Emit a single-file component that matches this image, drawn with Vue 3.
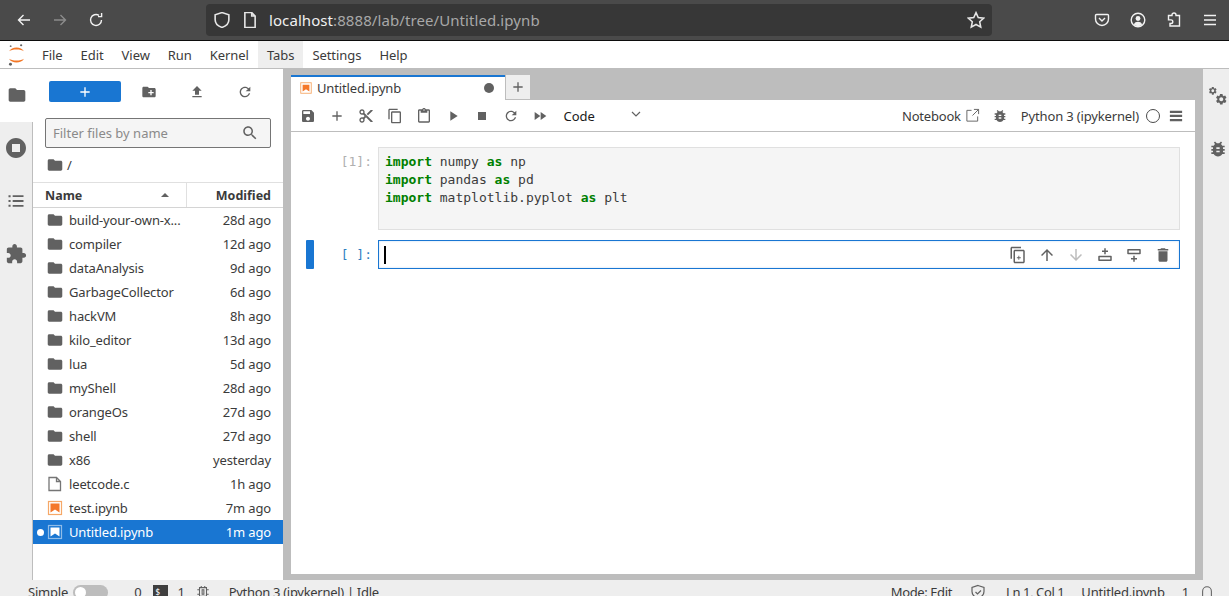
<script setup>
const icons = {
  folder: "M10 4H4c-1.1 0-1.99.9-1.99 2L2 18c0 1.1.9 2 2 2h16c1.1 0 2-.9 2-2V8c0-1.1-.9-2-2-2h-8l-2-2z",
  stopCircle: "M12 2C6.48 2 2 6.48 2 12s4.48 10 10 10 10-4.48 10-10S17.52 2 12 2zm4 14H8V8h8v8z",
  list: "M3 5h2.5v2.5H3zM8 5h13v2.2H8zM3 10.8h2.5v2.5H3zM8 10.9h13v2.2H8zM3 16.5h2.5V19H3zM8 16.7h13v2.2H8z",
  extension: "M20.5 11H19V7c0-1.1-.9-2-2-2h-4V3.5C13 2.12 11.88 1 10.5 1S8 2.12 8 3.5V5H4c-1.1 0-1.99.9-1.99 2v3.8H3.5c1.49 0 2.7 1.21 2.7 2.7s-1.21 2.7-2.7 2.7H2V20c0 1.1.9 2 2 2h3.8v-1.5c0-1.49 1.21-2.7 2.7-2.7 1.49 0 2.7 1.21 2.7 2.7V22H17c1.1 0 2-.9 2-2v-4h1.5c1.38 0 2.5-1.12 2.5-2.5S21.88 11 20.5 11z",
  add: "M19 13h-6v6h-2v-6H5v-2h6V5h2v6h6v2z",
  newFolder: "M20 6h-8l-2-2H4c-1.11 0-1.99.89-1.99 2L2 18c0 1.11.89 2 2 2h16c1.11 0 2-.89 2-2V8c0-1.11-.89-2-2-2zm-1 8h-3v3h-2v-3h-3v-2h3V9h2v3h3v2z",
  upload: "M9 16h6v-6h4l-7-7-7 7h4v6zm-4 2h14v2H5z",
  refresh: "M17.65 6.35C16.2 4.9 14.21 4 12 4c-4.42 0-7.99 3.58-7.99 8s3.57 8 7.99 8c3.73 0 6.84-2.55 7.73-6h-2.08c-.82 2.33-3.04 4-5.65 4-3.31 0-6-2.69-6-6s2.69-6 6-6c1.66 0 3.14.69 4.22 1.78L13 11h7V4l-2.35 2.35z",
  search: "M15.5 14h-.79l-.28-.27C15.41 12.59 16 11.11 16 9.5 16 5.91 13.09 3 9.5 3S3 5.91 3 9.5 5.91 16 9.5 16c1.61 0 3.09-.59 4.23-1.57l.27.28v.79l5 4.99L20.49 19l-4.99-5zm-6 0C7.01 14 5 11.99 5 9.5S7.01 5 9.5 5 14 7.01 14 9.5 11.99 14 9.5 14z",
  save: "M17 3H5c-1.11 0-2 .9-2 2v14c0 1.1.89 2 2 2h14c1.1 0 2-.9 2-2V7l-4-4zm-5 16c-1.66 0-3-1.34-3-3s1.34-3 3-3 3 1.34 3 3-1.34 3-3 3zm3-10H5V5h10v4z",
  cut: "M9.64 7.64c.23-.5.36-1.05.36-1.64 0-2.21-1.79-4-4-4S2 3.79 2 6s1.79 4 4 4c.59 0 1.14-.13 1.64-.36L10 12l-2.36 2.36C7.14 14.13 6.59 14 6 14c-2.21 0-4 1.79-4 4s1.79 4 4 4 4-1.79 4-4c0-.59-.13-1.14-.36-1.64L12 14l7 7h3v-1L9.64 7.64zM6 8c-1.1 0-2-.89-2-2s.9-2 2-2 2 .89 2 2-.9 2-2 2zm0 12c-1.1 0-2-.89-2-2s.9-2 2-2 2 .89 2 2-.9 2-2 2zm6-7.5c-.28 0-.5-.22-.5-.5s.22-.5.5-.5.5.22.5.5-.22.5-.5.5zM19 3l-6 6 2 2 7-7V3z",
  copy: "M16 1H4c-1.1 0-2 .9-2 2v14h2V3h12V1zm3 4H8c-1.1 0-2 .9-2 2v14c0 1.1.9 2 2 2h11c1.1 0 2-.9 2-2V7c0-1.1-.9-2-2-2zm0 16H8V7h11v14z",
  paste: "M19 2h-4.18C14.4.84 13.3 0 12 0c-1.3 0-2.4.84-2.82 2H5c-1.1 0-2 .9-2 2v16c0 1.1.9 2 2 2h14c1.1 0 2-.9 2-2V4c0-1.1-.9-2-2-2zm-7 0c.55 0 1 .45 1 1s-.45 1-1 1-1-.45-1-1 .45-1 1-1zm7 18H5V4h2v3h10V4h2v16z",
  run: "M8 5v14l11-7z",
  stop: "M6 6h12v12H6z",
  fastForward: "M4 18l8.5-6L4 6v12zm9-12v12l8.5-6L13 6z",
  bug: "M20 8h-2.81c-.45-.78-1.07-1.45-1.82-1.96L17 4.41 15.59 3l-2.17 2.17C12.96 5.06 12.49 5 12 5c-.49 0-.96.06-1.41.17L8.41 3 7 4.41l1.62 1.63C7.88 6.55 7.26 7.22 6.81 8H4v2h2.09c-.05.33-.09.66-.09 1v1H4v2h2v1c0 .34.04.67.09 1H4v2h2.81c1.04 1.79 2.97 3 5.19 3s4.15-1.21 5.19-3H20v-2h-2.09c.05-.33.09-.66.09-1v-1h2v-2h-2v-1c0-.34-.04-.67-.09-1H20V8zm-6 8h-4v-2h4v2zm0-4h-4v-2h4v2z",
  up: "M4 12l1.41 1.41L11 7.83V20h2V7.83l5.58 5.59L20 12l-8-8-8 8z",
  down: "M20 12l-1.41-1.41L13 16.17V4h-2v12.17l-5.58-5.59L4 12l8 8 8-8z",
  trash: "M6 19c0 1.1.9 2 2 2h8c1.1 0 2-.9 2-2V7H6v12zM19 4h-3.5l-1-1h-5l-1 1H5v2h14V4z",
  cog: "M19.14 12.94c.04-.3.06-.61.06-.94 0-.32-.02-.64-.07-.94l2.03-1.58c.18-.14.23-.41.12-.61l-1.92-3.32c-.12-.22-.37-.29-.59-.22l-2.39.96c-.5-.38-1.03-.7-1.62-.94l-.36-2.54c-.04-.24-.24-.41-.48-.41h-3.84c-.24 0-.43.17-.47.41l-.36 2.54c-.59.24-1.13.57-1.62.94l-2.39-.96c-.22-.08-.47 0-.59.22L2.74 8.87c-.12.21-.08.47.12.61l2.03 1.58c-.05.3-.09.63-.09.94s.02.64.07.94l-2.03 1.58c-.18.14-.23.41-.12.61l1.92 3.32c.12.22.37.29.59.22l2.39-.96c.5.38 1.03.7 1.62.94l.36 2.54c.05.24.24.41.48.41h3.84c.24 0 .44-.17.47-.41l.36-2.54c.59-.24 1.13-.56 1.62-.94l2.39.96c.22.08.47 0 .59-.22l1.92-3.32c.12-.22.07-.47-.12-.61l-2.01-1.58zM12 15.6c-1.98 0-3.6-1.62-3.6-3.6s1.62-3.6 3.6-3.6 3.6 1.62 3.6 3.6-1.62 3.6-3.6 3.6z",
}

const menus = ["File", "Edit", "View", "Run", "Kernel", "Tabs", "Settings", "Help"]
const nbTools = ["save", "add", "cut", "copy", "paste", "run", "stop", "refresh", "fastForward"]

const files = [
  { name: "build-your-own-x...", time: "28d ago", type: "folder" },
  { name: "compiler", time: "12d ago", type: "folder" },
  { name: "dataAnalysis", time: "9d ago", type: "folder" },
  { name: "GarbageCollector", time: "6d ago", type: "folder" },
  { name: "hackVM", time: "8h ago", type: "folder" },
  { name: "kilo_editor", time: "13d ago", type: "folder" },
  { name: "lua", time: "5d ago", type: "folder" },
  { name: "myShell", time: "28d ago", type: "folder" },
  { name: "orangeOs", time: "27d ago", type: "folder" },
  { name: "shell", time: "27d ago", type: "folder" },
  { name: "x86", time: "yesterday", type: "folder" },
  { name: "leetcode.c", time: "1h ago", type: "file" },
  { name: "test.ipynb", time: "7m ago", type: "nb" },
  { name: "Untitled.ipynb", time: "1m ago", type: "nb", selected: true },
]

const code = [
  ["numpy", "np"],
  ["pandas", "pd"],
  ["matplotlib.pyplot", "plt"],
]
</script>

<template>
  <div class="app">
    <header class="browser">
      <svg class="bi" viewBox="0 0 16 16"><path d="M14 8H2.5M7.5 3L2.5 8l5 5" /></svg>
      <svg class="bi dim" viewBox="0 0 16 16"><path d="M2 8h11.5M8.5 3l5 5-5 5" /></svg>
      <svg class="bi" viewBox="0 0 16 16"><path d="M13.5 8A5.5 5.5 0 1 1 11 3.4M13.6 1v3.6H10" /></svg>
      <div class="url">
        <svg class="bi small" viewBox="1 1 14 14"><path d="M8 1.5l6 2v4.2c0 3.3-2.6 5.6-6 6.8-3.4-1.2-6-3.5-6-6.8V3.5z" /></svg>
        <svg class="bi small" viewBox="2 1 12 14"><path d="M3.5 1.5h6l3 3v10h-9zM9.5 1.5v3h3" /></svg>
        <span class="addr"><b>localhost</b>:8888/lab/tree/Untitled.ipynb</span>
        <svg class="bi small star" viewBox="0 0 16 16"><path d="M8 1.5l2 4.3 4.7.6-3.4 3.2.9 4.7L8 12l-4.2 2.3.9-4.7L1.3 6.4 6 5.8z" /></svg>
      </div>
      <svg class="bi" viewBox="0 0 16 16"><path d="M2.5 2.5h11a1 1 0 0 1 1 1V7a6.5 6.5 0 0 1-13 0V3.5a1 1 0 0 1 1-1zM5 6l3 3 3-3" /></svg>
      <svg class="bi" viewBox="0 0 16 16">
        <circle cx="8" cy="8" r="6.8" />
        <circle cx="8" cy="6.5" r="2.4" class="solid" />
        <path d="M3.8 12.5c.8-2 2.4-2.7 4.2-2.7s3.4.7 4.2 2.7a6 6 0 0 1-8.4 0z" class="solid" />
      </svg>
      <svg class="bi" viewBox="0 0 16 16"><path d="M6 3.5V3a2 2 0 0 1 4 0v.5h3.5V14H4v-2.5h1a1.8 1.8 0 0 0 0-3.6H2.5V3.5z" /></svg>
      <svg class="bi" viewBox="0 0 16 16"><path d="M2 3.5h12M2 8h12M2 12.5h12" /></svg>
    </header>

    <nav class="menubar">
      <svg class="logo" viewBox="0 0 18 28">
        <path d="M1 10C3.5 4.500 14.5 4.500 17 10 14 7.4 4 7.4 1 10z" fill="#f37726" />
        <path d="M1 18C3.5 23.500 14.5 23.500 17 18 14 20.6 4 20.6 1 18z" fill="#f37726" />
        <circle cx="14" cy="3.5" r="1.2" fill="#616161" />
        <circle cx="2.5" cy="24" r="1.6" fill="#616161" />
        <circle cx="2.7" cy="4.5" r="1" fill="#767677" />
      </svg>
      <div class="menus">
        <span v-for="m in menus" :key="m" class="menu" :class="{ on: m === 'Tabs' }">{{ m }}</span>
      </div>
    </nav>

    <div class="body">
      <aside class="leftbar">
        <div class="ltab active"><svg class="ic big" viewBox="0 0 24 24"><path :d="icons.folder" /></svg></div>
        <div class="ltab"><svg class="ic huge" viewBox="0 0 24 24"><path :d="icons.stopCircle" fill-rule="evenodd" /></svg></div>
        <div class="ltab"><svg class="ic big" viewBox="0 0 24 24"><path :d="icons.list" /></svg></div>
        <div class="ltab"><svg class="ic wide" viewBox="0 0 24 24"><path :d="icons.extension" /></svg></div>
      </aside>

      <section class="browserpane">
        <div class="fbtools">
          <button class="newbtn"><svg class="ic white" viewBox="0 0 24 24"><path :d="icons.add" /></svg></button>
          <svg class="ic fb" viewBox="0 0 24 24"><path :d="icons.newFolder" /></svg>
          <svg class="ic fb" viewBox="0 0 24 24"><path :d="icons.upload" /></svg>
          <svg class="ic fb" viewBox="0 0 24 24"><path :d="icons.refresh" /></svg>
        </div>
        <div class="filter">
          <span>Filter files by name</span>
          <svg class="ic" viewBox="0 0 24 24"><path :d="icons.search" /></svg>
        </div>
        <div class="crumbs">
          <svg class="ic" viewBox="1 1 22 22"><path :d="icons.folder" /></svg>
          <span>/</span>
        </div>
        <div class="listhead">
          <div class="hname">Name <i class="caret"></i></div>
          <div class="hmod">Modified</div>
        </div>
        <div v-for="f in files" :key="f.name" class="row" :class="{ sel: f.selected }">
          <i v-if="f.selected" class="dot"></i>
          <svg v-if="f.type === 'folder'" class="ic" viewBox="1 1 22 22"><path :d="icons.folder" /></svg>
          <svg v-else-if="f.type === 'file'" class="ic doc" viewBox="0 0 16 16"><path d="M2 1.5h7.5l4 4v9H2zM9.5 1.5v4h4" /></svg>
          <svg v-else class="ic" viewBox="0 0 16 16">
            <rect x="1.5" y="1.5" width="13" height="13" class="nbframe" />
            <path d="M3.5 3.5h9v9l-4.5-3-4.5 3z" class="nbfill" />
          </svg>
          <span class="fname">{{ f.name }}</span>
          <span class="ftime">{{ f.time }}</span>
        </div>
      </section>

      <main class="dock">
        <div class="tabs">
          <div class="tab">
            <svg class="ic" viewBox="0 0 16 16">
              <rect x="1" y="1" width="14" height="14" class="nbframe" />
              <path d="M3.5 3.5h9v9l-4.5-3-4.5 3z" class="nbfill" />
            </svg>
            <span class="tabname">Untitled.ipynb</span>
            <i class="unsaved"></i>
          </div>
          <div class="addtab"><svg class="ic" viewBox="0 0 24 24"><path :d="icons.add" /></svg></div>
        </div>
        <div class="notebook">
          <div class="nbbar">
            <span v-for="t in nbTools" :key="t" class="tool"><svg class="ic" viewBox="0 0 24 24"><path :d="icons[t]" /></svg></span>
            <div class="celltype">
              <span>Code</span>
              <svg class="chev" viewBox="0 0 12 12"><path d="M2 4l4 4 4-4" /></svg>
            </div>
            <div class="nbright">
              <span class="nblink">Notebook</span>
              <svg class="ext" viewBox="0 0 16 16"><path d="M7 2.5H2V14h11.500V9M9.5 1.5h5v5M14.5 1.5L8 8" /></svg>
              <svg class="ic bug" viewBox="0 0 24 24"><path :d="icons.bug" /></svg>
              <span class="kernel">Python 3 (ipykernel)</span>
              <i class="kcircle"></i>
              <svg class="ic burger" viewBox="0 0 16 16"><path d="M1 2h14v2.5H1zM1 6.700h14v2.5H1zM1 11.400h14v2.5H1z" /></svg>
            </div>
          </div>

          <div class="cells">
            <div class="cell">
              <div class="gutter"></div>
              <div class="prompt">[1]:</div>
              <div class="input done">
                <div v-for="line in code" :key="line[0]" class="ln"><b>import</b> {{ line[0] }} <b>as</b> {{ line[1] }}</div>
              </div>
            </div>
            <div class="cell">
              <div class="gutter active"></div>
              <div class="prompt blue">[ ]:</div>
              <div class="input focus">
                <i class="cursor"></i>
                <div class="celltools">
                  <svg class="ic" viewBox="0 0 24 24"><path :d="icons.copy" /><path d="M12.5 13h1.2v2h2v1.2h-2v2h-1.2v-2h-2V15h2z" /></svg>
                  <svg class="ic" viewBox="0 0 24 24"><path :d="icons.up" /></svg>
                  <svg class="ic off" viewBox="0 0 24 24"><path :d="icons.down" /></svg>
                  <svg class="ic" viewBox="0 0 24 24"><path d="M11 3h2v3h3v2h-3v3h-2V8H8V6h3zM4 13h16a1 1 0 0 1 1 1v5a1 1 0 0 1-1 1H4a1 1 0 0 1-1-1v-5a1 1 0 0 1 1-1zm1 2v3h14v-3z" /></svg>
                  <svg class="ic" viewBox="0 0 24 24"><path d="M4 4h16a1 1 0 0 1 1 1v5a1 1 0 0 1-1 1H4a1 1 0 0 1-1-1V5a1 1 0 0 1 1-1zm1 2v3h14V6zM11 13h2v3h3v2h-3v3h-2v-3H8v-2h3z" /></svg>
                  <svg class="ic" viewBox="0 0 24 24"><path :d="icons.trash" /></svg>
                </div>
              </div>
            </div>
          </div>
        </div>
      </main>

      <aside class="rightbar">
        <div class="rtab">
          <svg class="gears" viewBox="0 0 24 24">
            <path :d="icons.cog" transform="translate(8 8) scale(.66)" fill-rule="evenodd" />
            <path :d="icons.cog" transform="scale(.48)" fill-rule="evenodd" />
          </svg>
        </div>
        <div class="rtab"><svg class="ic" viewBox="0 0 24 24"><path :d="icons.bug" /></svg></div>
      </aside>
    </div>

    <footer class="status">
      <span>Simple</span>
      <span class="toggle"><i></i></span>
      <span class="s0">0</span>
      <span class="term">$_</span>
      <span class="s1">1</span>
      <svg class="chip" viewBox="0 0 16 16"><path d="M4 3h8v10H4zM7 5.5h2v5H7zM6 1v2M10 1v2M6 13v2M10 13v2M1.5 5.5H4M1.5 10.5H4M12 5.5h2.5M12 10.5h2.5" /></svg>
      <span class="skernel">Python 3 (ipykernel) | Idle</span>
      <span class="mode">Mode: Edit</span>
      <svg class="chip sshield" viewBox="0 0 16 16"><path d="M8 1.5l6 2v4c0 3.3-2.6 5.6-6 6.8-3.4-1.2-6-3.5-6-6.8v-4zM5.5 8l2 2 3.5-3.5" /></svg>
      <span class="sln">Ln 1, Col 1</span>
      <span class="sfile">Untitled.ipynb</span>
      <span class="sone">1</span>
      <svg class="chip sbell" viewBox="0 0 16 16"><path d="M3 15V7a5 5 0 0 1 10 0v8" /></svg>
    </footer>
  </div>
</template>

<style>
html, body { margin: 0; overflow: hidden; }
</style>

<style scoped>
.app {
  width: 100vw;
  height: 100vh;
  display: flex;
  flex-direction: column;
  overflow: hidden;
  font-family: "Noto Sans", sans-serif;
  font-size: 13px;
  color: #3b3b3b;
  background: #fff;
}
i { display: block; }
.ic { width: 16px; height: 16px; fill: #616161; flex: none; display: block; }
.ic.big { width: 20px; height: 20px; }
.ic.huge { width: 24px; height: 24px; }
.ic.wide { width: 22px; height: 22px; }
.ic.white { fill: #fff; }

/* browser chrome */
.browser {
  height: 40px;
  flex: none;
  border-bottom: 1px solid #0c0c0c;
  background: #4a4a4a;
  display: flex;
  align-items: center;
  padding-left: 16px;
  gap: 20px;
}
.bi { width: 16px; height: 16px; fill: none; stroke: #f2f2f2; stroke-width: 1.4; flex: none; }
.bi .solid { fill: #f2f2f2; stroke: none; }
.bi.dim { stroke: #8c8c8c; }
.bi.small { stroke: #e6e6e6; }
.bi.star { width: 18px; height: 18px; }
.url {
  width: 786px;
  height: 32px;
  margin: 0 82px;
  background: #373737;
  border-radius: 4px;
  display: flex;
  align-items: center;
  box-sizing: border-box;
  padding: 0 7px 0 8px;
  gap: 12px;
  color: #a8a8a8;
  font-size: 15px;
}
.addr { margin-left: -1px; flex: 1; letter-spacing: 0.08px; }
.addr b { font-weight: 400; color: #f0f0f0; }

/* menu */
.menubar {
  height: 27px;
  flex: none;
  border-bottom: 1px solid #bdbdbd;
  display: flex;
  align-items: stretch;
}
.logo { width: 17px; height: 26px; margin-left: 8px; flex: none; align-self: center; }
.menus { display: flex; margin-left: 8px; }
.menu { padding: 0 9px; display: flex; align-items: center; letter-spacing: -0.06px; }
.menu.on { background: #eeeeee; }

.body { flex: 1; display: flex; min-height: 0; }

/* left bar */
.leftbar { width: 33px; flex: none; background: #eeeeee; border-right: 1px solid #bdbdbd; box-sizing: border-box; }
.ltab { height: 53px; display: flex; align-items: center; justify-content: center; }
.ltab .ic { margin-bottom: 1px; }
.ltab.active { background: #fff; width: 33px; }

/* file browser */
.browserpane { width: 250px; flex: none; background: #fff; }
.fbtools { display: flex; align-items: center; height: 21px; padding: 12px 0 0 16px; }
.newbtn {
  width: 72px; height: 21px; border: none; border-radius: 2px; background: #1976d2; padding: 0;
  display: flex; align-items: center; justify-content: center;
}
.fb { margin-left: 32px; }
.fb:first-of-type { margin-left: 20px; }
.filter {
  margin: 16px 12px 0;
  height: 30px;
  box-sizing: border-box;
  border: 1px solid #757575;
  border-radius: 2px;
  background: #f5f5f5;
  display: flex;
  align-items: center;
  justify-content: space-between;
  padding: 0 11px 0 7px;
  color: #8a8a8a;
}
.filter .ic { width: 18px; height: 18px; }
.crumbs { display: flex; align-items: center; gap: 4px; height: 34px; padding-left: 14px; }
.listhead {
  display: flex;
  height: 24px;
  border-top: 1px solid #e0e0e0;
  border-bottom: 1px solid #d4d4d4;
  font-weight: 700;
  font-size: 12.5px;
  line-height: 26px;
}
.hname { padding-left: 12px; box-sizing: border-box; width: 153px; position: relative; }
.caret {
  position: absolute; right: 17px; top: 10px; width: 0; height: 0;
  border-left: 4px solid transparent; border-right: 4px solid transparent; border-bottom: 4px solid #616161;
}
.hmod { flex: 1; text-align: right; padding-right: 12px; border-left: 1px solid #e0e0e0; }
.row { position: relative; height: 24px; display: flex; align-items: center; padding: 0 12px 0 14px; letter-spacing: -0.15px; }
.row .fname { margin-left: 6px; flex: 1; overflow: hidden; white-space: nowrap; }
.row.sel { background: #1976d2; color: #fff; }
.row.sel .ic { fill: #fff; }
.row.sel .nbframe { stroke: #8fbce8; }
.row.sel .nbfill { fill: #fff; }
.dot { position: absolute; left: 4px; top: 9px; width: 7px; height: 7px; border-radius: 50%; background: #fff; }
.doc { fill: none; stroke: #757575; stroke-width: 1.3; }
.nbframe { fill: none; stroke: #f6a868; stroke-width: 1.2; }
.nbfill { fill: #f4782a; }

/* dock */
.dock {
  flex: 1;
  background: #bdbdbd;
  padding: 6px 8px;
  display: flex;
  flex-direction: column;
  min-width: 0;
}
.tabs { display: flex; height: 25px; flex: none; }
.tab {
  width: 214px;
  box-sizing: border-box;
  background: #fff;
  border-top: 2px solid #1976d2;
  display: flex;
  align-items: center;
  padding: 0 10px 1px 9px;
}
.tab .ic { width: 12px; height: 12px; }
.tabname { margin-left: 5px; flex: 1; letter-spacing: -0.15px; }
.unsaved { width: 10px; height: 10px; border-radius: 50%; background: #616161; margin-right: 1px; }
.addtab { width: 24px; height: 24px; margin-left: 1px; background: #eeeeee; display: flex; align-items: center; justify-content: center; }
.notebook { flex: 1; background: #fff; display: flex; flex-direction: column; min-height: 0; }
.nbbar {
  height: 31px;
  flex: none;
  border-bottom: 1px solid #bdbdbd;
  display: flex;
  align-items: center;
  padding: 0 12px 0 2.5px;
}
.tool { width: 29px; display: flex; justify-content: center; }
.celltype { display: flex; align-items: center; width: 78px; margin-left: 9px; color: #1a1a1a; justify-content: space-between; }
.chev { width: 12px; height: 12px; fill: none; stroke: #616161; stroke-width: 1.2; margin-bottom: 4px; }
.nbright { margin-left: auto; display: flex; align-items: center; }
.nblink { letter-spacing: -0.2px; }
.ext { width: 15px; height: 15px; fill: none; stroke: #616161; stroke-width: 1; margin-left: 4px; }
.bug { margin-left: 12px; }
.kernel { margin-left: 13px; letter-spacing: -0.15px; }
.kcircle { width: 12px; height: 12px; border: 1px solid #4a4a4a; border-radius: 50%; margin-left: 7px; }
.burger { margin-left: 9px; width: 14px; height: 14px; }

.cells { padding-top: 15px; }
.cell { display: flex; margin-right: 15px; margin-bottom: 10px; }
.gutter { width: 8px; margin-left: 15px; border-radius: 1px; }
.gutter.active { background: #1976d2; }
.prompt {
  width: 64px;
  padding: 6px 6px 0 0;
  box-sizing: border-box;
  text-align: right;
  font-family: "DejaVu Sans Mono", monospace;
  font-size: 13px;
  line-height: 17px;
  color: #b0b0b0;
}
.prompt.blue { color: #307fc1; }
.input {
  flex: 1;
  box-sizing: border-box;
  font-family: "DejaVu Sans Mono", monospace;
  font-size: 13px;
  line-height: 18px;
  color: #3b3b3b;
}
.input.done { height: 83px; background: #f5f5f5; border: 1px solid #e0e0e0; padding: 5px 6px; }
.input b { color: #008000; }
.input.focus {
  height: 29px;
  border: 1px solid #1976d2;
  display: flex;
  align-items: center;
  padding-left: 5px;
  box-shadow: inset 0 0 2px rgba(25, 118, 210, 0.3);
}
.cursor { width: 1.5px; height: 18px; background: #000; }
.celltools { margin-left: auto; display: flex; gap: 11px; padding-right: 7px; }
.celltools .ic { width: 18px; height: 18px; }
.celltools .off { fill: #bdbdbd; }

/* right bar */
.rightbar { width: 26px; flex: none; background: #eeeeee; }
.rtab { height: 53px; display: flex; align-items: center; justify-content: center; padding-left: 4px; }
.rtab .ic { width: 20px; height: 20px; }
.gears { width: 20px; height: 20px; fill: #616161; }

/* status */
.status {
  height: 24px;
  flex: none;
  margin-bottom: -8px;
  background: #eeeeee;
  display: flex;
  align-items: center;
  padding-left: 28px;
  line-height: 24px;
  letter-spacing: -0.2px;
}
.toggle { width: 35px; height: 15px; background: #bdbdbd; border-radius: 8px; margin-left: 5px; position: relative; flex: none; }
.toggle i { position: absolute; left: 2px; top: 2px; width: 11px; height: 11px; border-radius: 50%; background: #fff; }
.s0 { margin-left: 26px; }
.term { margin-left: 12px; width: 15px; height: 15px; background: #3f3f3f; color: #fff; font-size: 8px; line-height: 14px; text-indent: 2px; flex: none; }
.s1 { margin-left: 9px; }
.chip { width: 14px; height: 14px; fill: none; stroke: #616161; stroke-width: 1.2; margin-left: 11px; flex: none; }
.skernel { margin-left: 19px; letter-spacing: -0.3px; }
.mode { margin-left: auto; letter-spacing: -0.4px; }
.sshield { width: 16px; height: 16px; margin-left: 18px; }
.sln { margin-left: 20px; letter-spacing: -0.4px; }
.sfile { margin-left: 17px; }
.sone { margin-left: 17px; }
.sbell { margin: 0 15px 0 11px; }
</style>
